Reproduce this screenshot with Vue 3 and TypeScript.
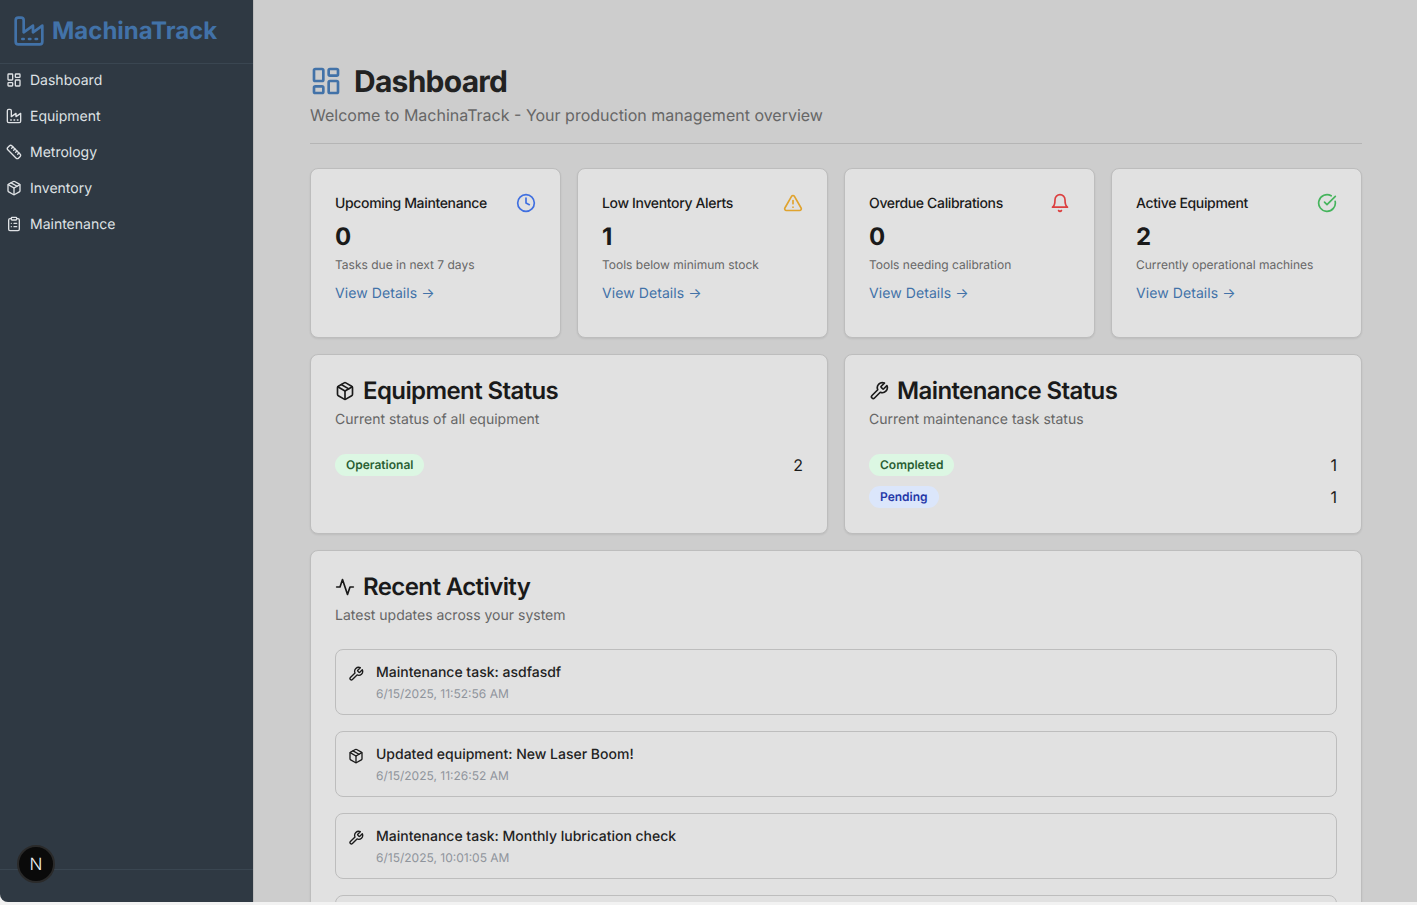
<template>
  <div class="app">
    <aside class="sidebar">
      <div class="brand">
        <svg class="brand-icon" viewBox="0 0 24 24"><path v-for="d in icons.factory" :key="d" :d="d" /></svg>
        <span class="brand-name">MachinaTrack</span>
      </div>
      <nav class="nav">
        <a v-for="item in navItems" :key="item.label" class="nav-item">
          <svg class="icon-16" viewBox="0 0 24 24"><path v-for="d in icons[item.icon]" :key="d" :d="d" /></svg>
          <span>{{ item.label }}</span>
        </a>
      </nav>
      <div class="sidebar-foot"></div>
      <div class="next-badge"><span>N</span></div>
    </aside>

    <main class="main">
      <header class="page-head">
        <h1 class="page-title">
          <svg class="title-icon" viewBox="0 0 24 24"><path v-for="d in icons.dashboard" :key="d" :d="d" /></svg>
          <span class="page-title-text">Dashboard</span>
        </h1>
        <p class="page-sub">Welcome to MachinaTrack - Your production management overview</p>
      </header>

      <section class="stats">
        <div v-for="stat in stats" :key="stat.title" class="card stat">
          <div class="stat-head">
            <span class="stat-title">{{ stat.title }}</span>
            <svg class="icon-20" :style="{ color: stat.color }" viewBox="0 0 24 24"><path v-for="d in icons[stat.icon]" :key="d" :d="d" /></svg>
          </div>
          <div class="stat-value">{{ stat.value }}</div>
          <div class="stat-desc">{{ stat.desc }}</div>
          <a class="stat-link">View Details →</a>
        </div>
      </section>

      <section class="status-grid">
        <div v-for="panel in panels" :key="panel.title" class="card panel">
          <h2 class="panel-title">
            <svg class="icon-20" viewBox="0 0 24 24"><path v-for="d in icons[panel.icon]" :key="d" :d="d" /></svg>
            {{ panel.title }}
          </h2>
          <p class="panel-sub">{{ panel.sub }}</p>
          <div class="rows">
            <div v-for="row in panel.rows" :key="row.label" class="row">
              <span class="badge" :class="row.kind">{{ row.label }}</span>
              <span class="count">{{ row.count }}</span>
            </div>
          </div>
        </div>
      </section>

      <section class="card panel">
        <h2 class="panel-title">
          <svg class="icon-20" viewBox="0 0 24 24"><path v-for="d in icons.activity" :key="d" :d="d" /></svg>
          Recent Activity
        </h2>
        <p class="panel-sub">Latest updates across your system</p>
        <div class="activity">
          <div v-for="entry in activity" :key="entry.text" class="entry">
            <svg class="icon-16 entry-icon" viewBox="0 0 24 24"><path v-for="d in icons[entry.icon]" :key="d" :d="d" /></svg>
            <div>
              <div class="entry-text">{{ entry.text }}</div>
              <div class="entry-date">{{ entry.date }}</div>
            </div>
          </div>
          <!-- next entry only peeks in above the fold -->
          <div class="entry entry-cut"></div>
        </div>
      </section>
    </main>
  </div>
</template>

<script setup lang="ts">
const icons: Record<string, string[]> = {
  dashboard: [
    'M4 3h5a1 1 0 0 1 1 1v7a1 1 0 0 1-1 1H4a1 1 0 0 1-1-1V4a1 1 0 0 1 1-1Z',
    'M15 3h5a1 1 0 0 1 1 1v3a1 1 0 0 1-1 1h-5a1 1 0 0 1-1-1V4a1 1 0 0 1 1-1Z',
    'M15 12h5a1 1 0 0 1 1 1v7a1 1 0 0 1-1 1h-5a1 1 0 0 1-1-1v-7a1 1 0 0 1 1-1Z',
    'M4 16h5a1 1 0 0 1 1 1v3a1 1 0 0 1-1 1H4a1 1 0 0 1-1-1v-3a1 1 0 0 1 1-1Z'
  ],
  factory: [
    'M2 20a2 2 0 0 0 2 2h16a2 2 0 0 0 2-2V8l-7 5V8l-7 5V4a2 2 0 0 0-2-2H4a2 2 0 0 0-2 2Z',
    'M17 18h1',
    'M12 18h1',
    'M7 18h1'
  ],
  ruler: [
    'M21.3 15.3a2.4 2.4 0 0 1 0 3.4l-2.6 2.6a2.4 2.4 0 0 1-3.4 0L2.7 8.7a2.41 2.41 0 0 1 0-3.4l2.6-2.6a2.41 2.41 0 0 1 3.4 0Z',
    'm14.5 12.5 2-2',
    'm11.5 9.5 2-2',
    'm8.5 6.5 2-2',
    'm17.5 15.5 2-2'
  ],
  package: [
    'M11 21.73a2 2 0 0 0 2 0l7-4A2 2 0 0 0 21 16V8a2 2 0 0 0-1-1.73l-7-4a2 2 0 0 0-2 0l-7 4A2 2 0 0 0 3 8v8a2 2 0 0 0 1 1.73z',
    'M12 22V12',
    'M3.29 7 12 12l8.71-5',
    'm7.5 4.27 9 5.15'
  ],
  clipboard: [
    'M9 2h6a1 1 0 0 1 1 1v2a1 1 0 0 1-1 1H9a1 1 0 0 1-1-1V3a1 1 0 0 1 1-1Z',
    'M16 4h2a2 2 0 0 1 2 2v14a2 2 0 0 1-2 2H6a2 2 0 0 1-2-2V6a2 2 0 0 1 2-2h2',
    'M12 11h4',
    'M12 16h4',
    'M8 11h.01',
    'M8 16h.01'
  ],
  clock: ['M22 12a10 10 0 1 1-20 0 10 10 0 0 1 20 0Z', 'M12 6v6l4 2'],
  alert: [
    'm21.73 18-8-14a2 2 0 0 0-3.48 0l-8 14A2 2 0 0 0 4 21h16a2 2 0 0 0 1.73-3',
    'M12 9v4',
    'M12 17h.01'
  ],
  bell: ['M6 8a6 6 0 0 1 12 0c0 7 3 9 3 9H3s3-2 3-9', 'M10.3 21a1.94 1.94 0 0 0 3.4 0'],
  check: ['M21.801 10A10 10 0 1 1 17 3.335', 'm9 11 3 3L22 4'],
  wrench: [
    'M14.7 6.3a1 1 0 0 0 0 1.4l1.6 1.6a1 1 0 0 0 1.4 0l3.77-3.77a6 6 0 0 1-7.94 7.94l-6.91 6.91a2.12 2.12 0 0 1-3-3l6.91-6.91a6 6 0 0 1 7.94-7.94l-3.76 3.76z'
  ],
  activity: ['M22 12h-4l-3 9L9 3l-3 9H2']
}

const navItems = [
  { label: 'Dashboard', icon: 'dashboard' },
  { label: 'Equipment', icon: 'factory' },
  { label: 'Metrology', icon: 'ruler' },
  { label: 'Inventory', icon: 'package' },
  { label: 'Maintenance', icon: 'clipboard' }
]

const stats = [
  { title: 'Upcoming Maintenance', value: 0, desc: 'Tasks due in next 7 days', icon: 'clock', color: '#3f6fe0' },
  { title: 'Low Inventory Alerts', value: 1, desc: 'Tools below minimum stock', icon: 'alert', color: '#e0a32e' },
  { title: 'Overdue Calibrations', value: 0, desc: 'Tools needing calibration', icon: 'bell', color: '#dc3f3f' },
  { title: 'Active Equipment', value: 2, desc: 'Currently operational machines', icon: 'check', color: '#45b45c' }
]

const panels = [
  {
    title: 'Equipment Status',
    sub: 'Current status of all equipment',
    icon: 'package',
    rows: [{ label: 'Operational', count: 2, kind: 'green' }]
  },
  {
    title: 'Maintenance Status',
    sub: 'Current maintenance task status',
    icon: 'wrench',
    rows: [
      { label: 'Completed', count: 1, kind: 'green' },
      { label: 'Pending', count: 1, kind: 'blue' }
    ]
  }
]

const activity = [
  { text: 'Maintenance task: asdfasdf', date: '6/15/2025, 11:52:56 AM', icon: 'wrench' },
  { text: 'Updated equipment: New Laser Boom!', date: '6/15/2025, 11:26:52 AM', icon: 'package' },
  { text: 'Maintenance task: Monthly lubrication check', date: '6/15/2025, 10:01:05 AM', icon: 'wrench' }
]
</script>

<style>
html,
body {
  margin: 0;
  background: #f2f2f2;
}
</style>

<style scoped>
.app {
  display: flex;
  height: 902px;
  overflow: hidden;
  border-radius: 0 0 0 8px;
  background: #cdcdcd;
  font-family: Inter, "Liberation Sans", sans-serif;
  color: #1a1a1a;
  text-rendering: geometricPrecision;
}

svg {
  flex: none;
  fill: none;
  stroke: currentColor;
  stroke-width: 2;
  stroke-linecap: round;
  stroke-linejoin: round;
}

.icon-16 {
  width: 16px;
  height: 16px;
}

.icon-20 {
  width: 20px;
  height: 20px;
}

.sidebar {
  position: relative;
  flex: none;
  display: flex;
  flex-direction: column;
  width: 253px;
  background: #2f3943;
  border-right: 1px solid #bcbcbc;
  color: #dfe2e5;
}

.brand {
  display: flex;
  align-items: center;
  gap: 7px;
  box-sizing: border-box;
  height: 64px;
  padding: 0 0 2px 13px;
  border-bottom: 1px solid #3a4651;
}

.brand-icon {
  width: 32px;
  height: 32px;
  color: #4272a8;
}

.brand-name {
  font-size: 24px;
  line-height: 32px;
  font-weight: 700;
  color: #4272a8;
}

.nav {
  flex: 1;
  display: flex;
  flex-direction: column;
  gap: 4px;
}

.nav-item {
  display: flex;
  align-items: center;
  gap: 8px;
  height: 32px;
  padding-left: 6px;
  font-size: 14px;
}

.sidebar-foot {
  height: 32px;
  border-top: 1px solid #3a4651;
}

.next-badge {
  position: absolute;
  left: 17px;
  top: 845px;
  display: flex;
  align-items: center;
  justify-content: center;
  box-sizing: border-box;
  width: 38px;
  height: 38px;
  padding-top: 1px;
  border: 2px solid #2a2a2a;
  border-radius: 50%;
  background: #0a0a0a;
  color: #f2f2f2;
  font-size: 17px;
  font-weight: 300;
}

.main {
  flex: 1;
  min-width: 0;
  padding: 63px 55px 0 56px;
}

.page-head {
  padding-bottom: 16px;
  margin-bottom: 24px;
  border-bottom: 1px solid #b5b5b5;
}

.page-title {
  display: flex;
  align-items: center;
  gap: 12px;
  height: 36px;
  margin: 0;
  font-size: 30px;
  line-height: 36px;
  font-weight: 700;
  letter-spacing: -0.025em;
  color: #222;
}

.page-title-text {
  margin-top: 1px;
}

.title-icon {
  width: 32px;
  height: 32px;
  color: #4272a8;
}

.page-sub {
  margin: 4px 0 0;
  font-size: 16px;
  line-height: 24px;
  color: #666;
}

.stats {
  display: grid;
  grid-template-columns: repeat(4, 1fr);
  gap: 16px;
  margin-bottom: 16px;
}

.status-grid {
  display: grid;
  grid-template-columns: repeat(2, 1fr);
  gap: 16px;
  margin-bottom: 16px;
}

.card {
  border: 1px solid #bdbdbd;
  border-radius: 8px;
  background: #e1e1e1;
  box-shadow: 0 1px 2px rgba(0, 0, 0, 0.08);
}

.stat {
  padding: 24px 24px 33px;
}

.stat-head {
  display: flex;
  align-items: center;
  justify-content: space-between;
  height: 20px;
}

.stat-title {
  margin-top: 2px;
  font-size: 14px;
  line-height: 20px;
  font-weight: 500;
  letter-spacing: -0.025em;
}

.stat-value {
  margin-top: 8px;
  font-size: 24px;
  line-height: 32px;
  font-weight: 700;
}

.stat-desc {
  margin-top: 4px;
  font-size: 12px;
  line-height: 16px;
  color: #666;
}

.stat-link {
  display: block;
  margin-top: 11px;
  font-size: 14px;
  line-height: 20px;
  letter-spacing: 0.08px;
  color: #4272a8;
}

.panel {
  padding: 24px;
}

.panel-title {
  display: flex;
  align-items: center;
  gap: 8px;
  margin: 0;
  font-size: 24px;
  line-height: 24px;
  font-weight: 600;
  letter-spacing: -0.025em;
  color: #1a1a1a;
}

.panel-sub {
  margin: 7px 0 0;
  font-size: 14px;
  line-height: 20px;
  color: #666;
}

.rows {
  display: flex;
  flex-direction: column;
  gap: 8px;
  margin-top: 23px;
}

.row {
  display: flex;
  align-items: center;
  justify-content: space-between;
  height: 24px;
}

.badge {
  padding: 0 11px;
  border-radius: 11px;
  font-size: 12px;
  line-height: 22px;
  font-weight: 600;
}

.badge.green {
  background: #dcf7e3;
  color: #2a5f33;
}

.badge.blue {
  background: #dbe6fb;
  color: #2638a8;
}

.count {
  font-size: 16px;
  line-height: 24px;
}

.activity {
  display: flex;
  flex-direction: column;
  gap: 16px;
  margin-top: 23px;
}

.entry {
  display: flex;
  align-items: flex-start;
  gap: 12px;
  padding: 12px;
  border: 1px solid #bdbdbd;
  border-radius: 8px;
}

.entry-cut {
  height: 40px;
}

.entry-icon {
  margin-top: 4px;
}

.entry-text {
  margin-top: 1px;
  font-size: 14px;
  line-height: 20px;
  font-weight: 500;
  color: #222;
}

.entry-date {
  margin-top: 3px;
  font-size: 12px;
  line-height: 16px;
  color: #8f949c;
}
</style>
